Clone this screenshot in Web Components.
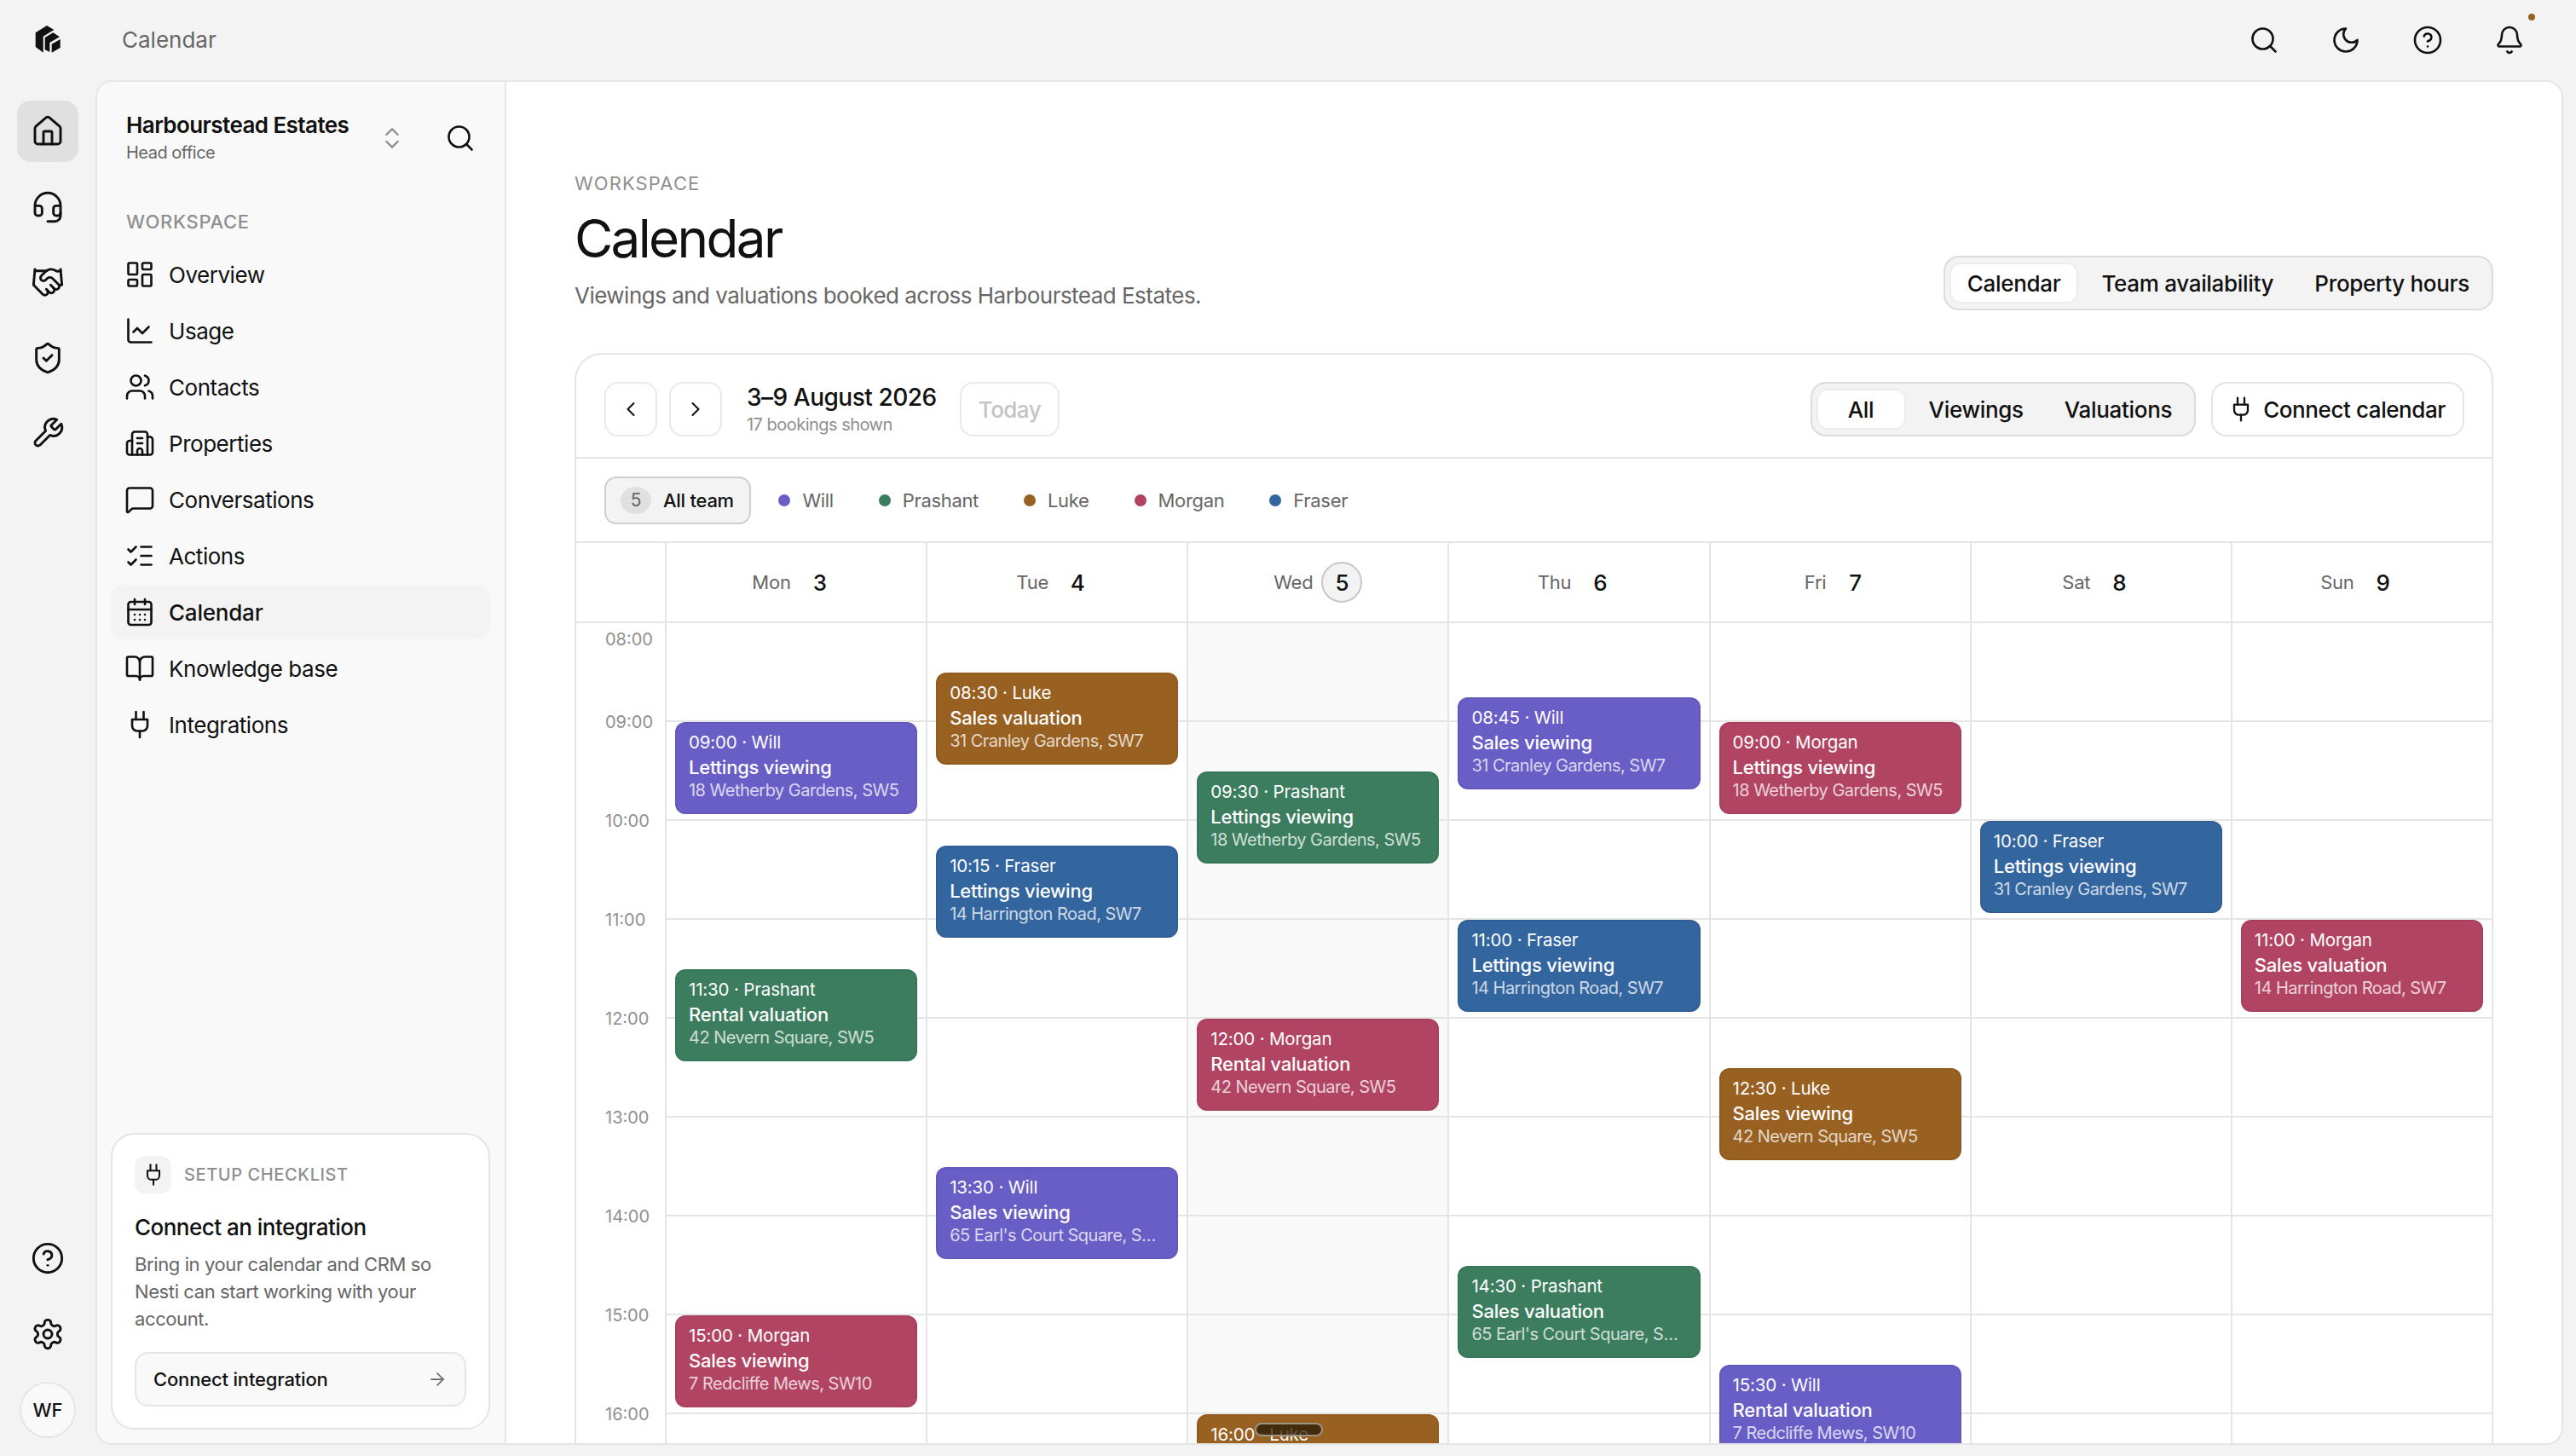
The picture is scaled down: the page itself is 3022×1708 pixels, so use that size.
<!doctype html>
<html>
<head>
<meta charset="utf-8">
<title>Calendar</title>
<style>
    html, body { margin: 0; height: 100%; overflow: hidden; }
    body { background: #f3f3f3; color: #111; font-family: Inter, "Liberation Sans", sans-serif; }
</style>
</head>
<body>
<app-shell></app-shell>
<script>
    const ICONS = {
        home: '<path d="M15 21v-8a1 1 0 0 0-1-1h-4a1 1 0 0 0-1 1v8"/><path d="M3 10a2 2 0 0 1 .709-1.528l7-5.999a2 2 0 0 1 2.582 0l7 5.999A2 2 0 0 1 21 10v9a2 2 0 0 1-2 2H5a2 2 0 0 1-2-2z"/>',
        headset: '<path d="M3 11h3a2 2 0 0 1 2 2v3a2 2 0 0 1-2 2H5a2 2 0 0 1-2-2v-5Zm0 0a9 9 0 1 1 18 0m0 0v5a2 2 0 0 1-2 2h-1a2 2 0 0 1-2-2v-3a2 2 0 0 1 2-2h3Z"/><path d="M21 16v2a4 4 0 0 1-4 4h-5"/>',
        handshake: '<path d="m11 17 2 2a1 1 0 1 0 3-3"/><path d="m14 14 2.5 2.5a1 1 0 1 0 3-3l-3.88-3.88a3 3 0 0 0-4.24 0l-.88.88a1 1 0 1 1-3-3l2.81-2.81a5.79 5.79 0 0 1 7.06-.87l.47.28a2 2 0 0 0 1.42.25L21 4"/><path d="m21 3 1 11h-2"/><path d="M3 3 2 14l6.5 6.5a1 1 0 1 0 3-3"/><path d="M3 4h8"/>',
        shield: '<path d="M20 13c0 5-3.5 7.5-7.66 8.95a1 1 0 0 1-.67-.01C7.5 20.5 4 18 4 13V6a1 1 0 0 1 1-1c2 0 4.5-1.2 6.24-2.72a1.17 1.17 0 0 1 1.52 0C14.51 3.81 17 5 19 5a1 1 0 0 1 1 1z"/><path d="m9 12 2 2 4-4"/>',
        wrench: '<path d="M14.7 6.3a1 1 0 0 0 0 1.4l1.6 1.6a1 1 0 0 0 1.4 0l3.77-3.77a6 6 0 0 1-7.94 7.94l-6.91 6.91a2.12 2.12 0 0 1-3-3l6.91-6.91a6 6 0 0 1 7.94-7.94l-3.76 3.76z"/>',
        search: '<circle cx="11" cy="11" r="8"/><path d="m21 21-4.3-4.3"/>',
        moon: '<path d="M12 3a6 6 0 0 0 9 9 9 9 0 1 1-9-9Z"/>',
        help: '<circle cx="12" cy="12" r="10"/><path d="M9.09 9a3 3 0 0 1 5.83 1c0 2-3 3-3 3"/><path d="M12 17h.01"/>',
        bell: '<path d="M10.268 21a2 2 0 0 0 3.464 0"/><path d="M3.262 15.326A1 1 0 0 0 4 17h16a1 1 0 0 0 .74-1.673C19.41 13.956 18 12.499 18 8A6 6 0 0 0 6 8c0 4.499-1.411 5.956-2.738 7.326"/>',
        settings: '<path d="M12.22 2h-.44a2 2 0 0 0-2 2v.18a2 2 0 0 1-1 1.73l-.43.25a2 2 0 0 1-2 0l-.15-.08a2 2 0 0 0-2.73.73l-.22.38a2 2 0 0 0 .73 2.73l.15.1a2 2 0 0 1 1 1.72v.51a2 2 0 0 1-1 1.74l-.15.09a2 2 0 0 0-.73 2.73l.22.38a2 2 0 0 0 2.73.73l.15-.08a2 2 0 0 1 2 0l.43.25a2 2 0 0 1 1 1.73V20a2 2 0 0 0 2 2h.44a2 2 0 0 0 2-2v-.18a2 2 0 0 1 1-1.73l.43-.25a2 2 0 0 1 2 0l.15.08a2 2 0 0 0 2.73-.73l.22-.39a2 2 0 0 0-.73-2.73l-.15-.08a2 2 0 0 1-1-1.74v-.5a2 2 0 0 1 1-1.74l.15-.09a2 2 0 0 0 .73-2.73l-.22-.38a2 2 0 0 0-2.73-.73l-.15.08a2 2 0 0 1-2 0l-.43-.25a2 2 0 0 1-1-1.73V4a2 2 0 0 0-2-2z"/><circle cx="12" cy="12" r="3"/>',
        overview: '<rect x="3" y="3" width="7" height="9" rx="1"/><rect x="14" y="3" width="7" height="5" rx="1"/><rect x="14" y="12" width="7" height="9" rx="1"/><rect x="3" y="16" width="7" height="5" rx="1"/>',
        usage: '<path d="M3 3v16a2 2 0 0 0 2 2h16"/><path d="m19 9-5 5-4-4-3 3"/>',
        contacts: '<path d="M16 21v-2a4 4 0 0 0-4-4H6a4 4 0 0 0-4 4v2"/><circle cx="9" cy="7" r="4"/><path d="M16 3.128a4 4 0 0 1 0 7.744"/><path d="M22 21v-2a4 4 0 0 0-3-3.87"/>',
        properties: '<path d="M10 12h4"/><path d="M10 8h4"/><path d="M14 21v-3a2 2 0 0 0-4 0v3"/><path d="M6 10H4a2 2 0 0 0-2 2v7a2 2 0 0 0 2 2h16a2 2 0 0 0 2-2V9a2 2 0 0 0-2-2h-2"/><path d="M6 21V5a2 2 0 0 1 2-2h8a2 2 0 0 1 2 2v16"/>',
        chat: '<path d="M22 17a2 2 0 0 1-2 2H6.828a2 2 0 0 0-1.414.586l-2.202 2.202A.71.71 0 0 1 2 21.286V5a2 2 0 0 1 2-2h16a2 2 0 0 1 2 2z"/>',
        actions: '<path d="M13 5h8"/><path d="M13 12h8"/><path d="M13 19h8"/><path d="m3 17 2 2 4-4"/><path d="m3 7 2 2 4-4"/>',
        calendar: '<path d="M8 2v4"/><path d="M16 2v4"/><rect x="3" y="4" width="18" height="18" rx="2"/><path d="M3 10h18"/><path d="M8 14h.01"/><path d="M12 14h.01"/><path d="M16 14h.01"/><path d="M8 18h.01"/><path d="M12 18h.01"/><path d="M16 18h.01"/>',
        book: '<path d="M12 7v14"/><path d="M3 18a1 1 0 0 1-1-1V4a1 1 0 0 1 1-1h5a4 4 0 0 1 4 4 4 4 0 0 1 4-4h5a1 1 0 0 1 1 1v13a1 1 0 0 1-1 1h-6a3 3 0 0 0-3 3 3 3 0 0 0-3-3z"/>',
        plug: '<path d="M12 22v-5"/><path d="M9 8V2"/><path d="M15 8V2"/><path d="M18 8v5a4 4 0 0 1-4 4h-4a4 4 0 0 1-4-4V8Z"/>',
        updown: '<path d="m7 15 5 5 5-5"/><path d="m7 9 5-5 5 5"/>',
        arrow: '<path d="M5 12h14"/><path d="m12 5 7 7-7 7"/>',
        prev: '<path d="m15 18-6-6 6-6"/>',
        next: '<path d="m9 18 6-6-6-6"/>'
    };

    class UiIcon extends HTMLElement {
        connectedCallback() {
            const size = this.getAttribute('size') || 36;
            const weight = this.getAttribute('weight') || 1.75;
            const root = this.shadowRoot || this.attachShadow({mode: 'open'});
            root.innerHTML = `<style>:host { display: inline-flex; flex: none; color: inherit; }</style>
                <svg width="${size}" height="${size}" viewBox="0 0 24 24" fill="none" stroke="currentColor" stroke-width="${weight}" stroke-linecap="round" stroke-linejoin="round">${ICONS[this.getAttribute('name')]}</svg>`;
        }
    }

    class TopBar extends HTMLElement {
        connectedCallback() {
            this.attachShadow({mode: 'open'}).innerHTML = `
            <style>
                :host { display: flex; align-items: center; height: 94px; padding-left: 143px; padding-right: 60px; }
                .title { flex: 1; font-size: 26px; color: #666; margin-top: -2px; }
                .acts { display: flex; gap: 60px; }
                .bell { position: relative; display: flex; }
                .bell i { position: absolute; right: -12px; top: -13px; width: 8px; height: 8px; border-radius: 50%; background: #986021; }
            </style>
            <div class="title">Calendar</div>
            <div class="acts">
                <ui-icon name="search"></ui-icon>
                <ui-icon name="moon"></ui-icon>
                <ui-icon name="help"></ui-icon>
                <span class="bell"><ui-icon name="bell"></ui-icon><i></i></span>
            </div>`;
        }
    }

    class SideRail extends HTMLElement {
        connectedCallback() {
            this.attachShadow({mode: 'open'}).innerHTML = `
            <style>
                :host { display: flex; flex-direction: column; align-items: center; width: 112px; box-sizing: border-box; padding: 24px 0 21px; }
                .b { width: 72px; height: 72px; border-radius: 16px; display: flex; align-items: center; justify-content: center; margin-bottom: 16.5px; }
                .b.on { background: #e0e0e0; }
                .sp { flex: 1; }
                .av { width: 66px; height: 66px; box-sizing: border-box; border-radius: 50%; background: #f9f9f9; border: 2px solid #e5e5e5; display: flex; align-items: center; justify-content: center; font-size: 22px; font-weight: 500; margin-top: 4px; }
            </style>
            <div class="b on"><ui-icon name="home" size="40"></ui-icon></div>
            <div class="b"><ui-icon name="headset" size="40"></ui-icon></div>
            <div class="b"><ui-icon name="handshake" size="40"></ui-icon></div>
            <div class="b"><ui-icon name="shield" size="40"></ui-icon></div>
            <div class="b"><ui-icon name="wrench" size="40"></ui-icon></div>
            <div class="sp"></div>
            <div class="b"><ui-icon name="help" size="40"></ui-icon></div>
            <div class="b"><ui-icon name="settings" size="40"></ui-icon></div>
            <div class="av">WF</div>`;
        }
    }

    class NavItem extends HTMLElement {
        connectedCallback() {
            const on = this.hasAttribute('active');
            this.attachShadow({mode: 'open'}).innerHTML = `
            <style>
                :host { display: flex; align-items: center; gap: 16px; height: 64px; margin-bottom: 2px; padding-left: 16px; border-radius: 14px; font-size: 26px; letter-spacing: ${on ? '-.008em' : '-.018em'}; background: ${on ? '#f3f3f3' : 'transparent'}; font-weight: ${on ? 500 : 400}; }
            </style>
            <ui-icon name="${this.getAttribute('icon')}"></ui-icon><slot></slot>`;
        }
    }

    class SetupCard extends HTMLElement {
        connectedCallback() {
            this.attachShadow({mode: 'open'}).innerHTML = `
            <style>
                :host { display: block; box-sizing: border-box; height: 348px; background: #fff; border: 2px solid #e5e5e5; border-radius: 28px; padding: 25px 26px; }
                .top { display: flex; align-items: center; gap: 15px; }
                .badge { width: 43px; height: 44px; border-radius: 12px; background: #f3f3f3; display: flex; align-items: center; justify-content: center; }
                .eyebrow { font-size: 20px; letter-spacing: .03em; color: #8f8f8f; font-weight: 500; }
                h3 { margin: 24px 0 0; font-size: 26px; line-height: 32px; font-weight: 500; letter-spacing: -.02em; }
                p { margin: 11px 0 0; font-size: 22px; line-height: 32px; color: #666; letter-spacing: -.018em; }
                .btn { display: flex; align-items: center; justify-content: space-between; box-sizing: border-box; height: 64px; margin-top: 23px; padding: 0 20px; background: #f9f9f9; border: 2px solid #e5e5e5; border-radius: 16px; font-size: 22px; letter-spacing: -.008em; font-weight: 500; color: #666; }
                .btn span { color: #111; }
            </style>
            <div class="top"><span class="badge"><ui-icon name="plug" size="28"></ui-icon></span><span class="eyebrow">SETUP CHECKLIST</span></div>
            <h3>Connect an integration</h3>
            <p>Bring in your calendar and CRM so Nesti can start working with your account.</p>
            <div class="btn"><span>Connect integration</span><ui-icon name="arrow" size="24"></ui-icon></div>`;
        }
    }

    class SideNav extends HTMLElement {
        connectedCallback() {
            const items = [['overview','Overview'],['usage','Usage'],['contacts','Contacts'],['properties','Properties'],['chat','Conversations'],['actions','Actions'],['calendar','Calendar'],['book','Knowledge base'],['plug','Integrations']];
            this.attachShadow({mode: 'open'}).innerHTML = `
            <style>
                :host { display: flex; flex-direction: column; box-sizing: border-box; width: 480px; flex: none; background: #f9f9f9; border-right: 2px solid #e5e5e5; padding: 0 17px 16px 16px; }
                .org { display: flex; align-items: center; height: 132px; padding: 0 17px 0 18px; }
                .name { font-size: 26px; font-weight: 600; line-height: 32px; letter-spacing: -.022em; }
                .sub { font-size: 20px; line-height: 30px; margin-top: 1px; color: #666; letter-spacing: -.025em; }
                .txt { flex: 1; }
                .ud { color: #8f8f8f; margin-right: 46px; display: flex; }
                .lab { font-size: 22px; font-weight: 500; letter-spacing: .03em; color: #8f8f8f; padding: 0 18px; margin: 18px 0 16px; line-height: 28px; }
                .sp { flex: 1; }
            </style>
            <div class="org">
                <div class="txt"><div class="name">Harbourstead Estates</div><div class="sub">Head office</div></div>
                <span class="ud"><ui-icon name="updown" size="32"></ui-icon></span>
                <ui-icon name="search"></ui-icon>
            </div>
            <div class="lab">WORKSPACE</div>
            ${items.map(i => `<nav-item icon="${i[0]}"${i[1] === 'Calendar' ? ' active' : ''}>${i[1]}</nav-item>`).join('')}
            <div class="sp"></div>
            <setup-card></setup-card>`;
        }
    }

    class SegTabs extends HTMLElement {
        connectedCallback() {
            const items = this.getAttribute('items').split('|');
            const on = this.getAttribute('active');
            this.attachShadow({mode: 'open'}).innerHTML = `
            <style>
                :host { display: inline-flex; gap: 6px; box-sizing: border-box; height: 64px; padding: 6px 5px; background: #f3f3f3; border: 2px solid #dcdcdc; border-radius: 18px; font-size: 26px; font-weight: 500; letter-spacing: -.012em; }
                div { display: flex; align-items: center; justify-content: center; padding: 0 21px; border-radius: 13px; min-width: ${this.getAttribute('min') || 0}px; box-sizing: border-box; }
                div.on { background: #fff; box-shadow: 0 0 0 2px #ececec inset; }
            </style>
            ${items.map(t => `<div class="${t === on ? 'on' : ''}">${t}</div>`).join('')}`;
        }
    }

    class PageHeader extends HTMLElement {
        connectedCallback() {
            this.attachShadow({mode: 'open'}).innerHTML = `
            <style>
                :host { display: flex; justify-content: space-between; height: 163px; }
                seg-tabs { align-self: flex-end; }
                .eb { font-size: 22px; letter-spacing: .05em; color: #8f8f8f; line-height: 28px; }
                h1 { margin: 13px 0 0; font-size: 62px; line-height: 76px; font-weight: 400; letter-spacing: -.043em; }
                p { margin: 12px 0 0; font-size: 26px; line-height: 34px; color: #666; letter-spacing: -.02em; }
            </style>
            <div><div class="eb">WORKSPACE</div><h1>Calendar</h1><p>Viewings and valuations booked across Harbourstead Estates.</p></div>
            <seg-tabs items="Calendar|Team availability|Property hours" active="Calendar"></seg-tabs>`;
        }
    }

    class CalToolbar extends HTMLElement {
        connectedCallback() {
            this.attachShadow({mode: 'open'}).innerHTML = `
            <style>
                :host { display: flex; align-items: center; box-sizing: border-box; height: 122px; padding: 8px 32px 0 33px; border-bottom: 2px solid #e5e5e5; }
                .sq { width: 62px; height: 64px; box-sizing: border-box; border: 2px solid #e9e9e9; border-radius: 16px; display: flex; align-items: center; justify-content: center; margin-right: 14px; }
                .date { margin-left: 15px; margin-right: 27px; }
                .d { font-size: 28px; font-weight: 500; line-height: 36px; letter-spacing: -.017em; }
                .s { font-size: 20px; line-height: 28px; color: #8f8f8f; letter-spacing: -.026em; }
                .today { height: 64px; box-sizing: border-box; border: 2px solid #e9e9e9; border-radius: 16px; padding: 0 20px; display: flex; align-items: center; font-size: 26px; font-weight: 500; color: #c4c4c4; letter-spacing: -.02em; }
                .sp { flex: 1; }
                .conn { height: 64px; box-sizing: border-box; border: 2px solid #e5e5e5; border-radius: 18px; padding: 0 20px 0 17px; display: flex; align-items: center; gap: 10px; font-size: 26px; font-weight: 500; margin-left: 18px; letter-spacing: -.016em; }
            </style>
            <div class="sq"><ui-icon name="prev" size="28"></ui-icon></div>
            <div class="sq"><ui-icon name="next" size="28"></ui-icon></div>
            <div class="date"><div class="d">3–9 August 2026</div><div class="s">17 bookings shown</div></div>
            <div class="today">Today</div>
            <div class="sp"></div>
            <seg-tabs items="All|Viewings|Valuations" active="All" min="105"></seg-tabs>
            <div class="conn"><ui-icon name="plug" size="32"></ui-icon>Connect calendar</div>`;
        }
    }

    class CalFilter extends HTMLElement {
        connectedCallback() {
            const team = [['Will','#695dc6'],['Prashant','#3b7d5e'],['Luke','#986021'],['Morgan','#b24463'],['Fraser','#33659f']];
            this.attachShadow({mode: 'open'}).innerHTML = `
            <style>
                :host { display: flex; align-items: center; box-sizing: border-box; height: 99px; padding: 0 33px; gap: 12px; border-bottom: 2px solid #e5e5e5; font-size: 22px; letter-spacing: -.015em; color: #666; }
                .all { display: flex; align-items: center; gap: 14px; height: 56px; box-sizing: border-box; padding: 0 18px 0 17px; background: #f3f3f3; border: 2px solid #cfcfcf; border-radius: 14px; color: #111; font-weight: 500; letter-spacing: -.012em; }
                .n { width: 36px; height: 32px; border-radius: 50%; background: #e0e0e0; color: #666; display: flex; align-items: center; justify-content: center; font-size: 21px; font-weight: 400; }
                .p { display: flex; align-items: center; gap: 14px; padding: 0 20.5px; }
                .p i { width: 14px; height: 14px; border-radius: 50%; }
            </style>
            <div class="all"><span class="n">5</span>All team</div>
            ${team.map(t => `<div class="p"><i style="background:${t[1]}"></i>${t[0]}</div>`).join('')}`;
        }
    }

    class CalEvent extends HTMLElement {
        connectedCallback() {
            const [h, m] = this.getAttribute('at').split(':').map(Number);
            const top = (h - 8 + m / 60) * 116;
            this.style.setProperty('--top', top + 'px');
            this.style.setProperty('--bg', this.getAttribute('color'));
            this.attachShadow({mode: 'open'}).innerHTML = `
            <style>
                :host { position: absolute; left: 10px; right: 10px; top: var(--top); height: 108px; box-sizing: border-box; padding: 10px 16px; background: var(--bg); border-radius: 12px; box-shadow: inset 0 0 0 2px rgba(0,0,0,.05); color: #fff; overflow: hidden; }
                div { white-space: nowrap; overflow: hidden; text-overflow: ellipsis; }
                .a { font-size: 20.5px; font-weight: 400; line-height: 28px; letter-spacing: -.008em; }
                .b { font-size: 22px; font-weight: 500; line-height: 30px; letter-spacing: -.01em; }
                .c { font-size: 20px; line-height: 25px; opacity: .75; letter-spacing: -.026em; }
            </style>
            <div class="a">${this.getAttribute('at')} · ${this.getAttribute('who')}</div>
            <div class="b">${this.getAttribute('what')}</div>
            <div class="c">${this.getAttribute('where')}</div>`;
        }
    }

    const COLORS = {Will: '#695dc6', Prashant: '#3b7d5e', Luke: '#986021', Morgan: '#b24463', Fraser: '#33659f'};
    const WEEK = [
        ['Mon', 3, [['09:00','Will','Lettings viewing','18 Wetherby Gardens, SW5'],['11:30','Prashant','Rental valuation','42 Nevern Square, SW5'],['15:00','Morgan','Sales viewing','7 Redcliffe Mews, SW10']]],
        ['Tue', 4, [['08:30','Luke','Sales valuation','31 Cranley Gardens, SW7'],['10:15','Fraser','Lettings viewing','14 Harrington Road, SW7'],['13:30','Will','Sales viewing',"65 Earl's Court Square, SW5"]]],
        ['Wed', 5, [['09:30','Prashant','Lettings viewing','18 Wetherby Gardens, SW5'],['12:00','Morgan','Rental valuation','42 Nevern Square, SW5'],['16:00','Luke','Sales valuation','31 Cranley Gardens, SW7']]],
        ['Thu', 6, [['08:45','Will','Sales viewing','31 Cranley Gardens, SW7'],['11:00','Fraser','Lettings viewing','14 Harrington Road, SW7'],['14:30','Prashant','Sales valuation',"65 Earl's Court Square, SW5"]]],
        ['Fri', 7, [['09:00','Morgan','Lettings viewing','18 Wetherby Gardens, SW5'],['12:30','Luke','Sales viewing','42 Nevern Square, SW5'],['15:30','Will','Rental valuation','7 Redcliffe Mews, SW10']]],
        ['Sat', 8, [['10:00','Fraser','Lettings viewing','31 Cranley Gardens, SW7']]],
        ['Sun', 9, [['11:00','Morgan','Sales valuation','14 Harrington Road, SW7']]]
    ];

    class CalGrid extends HTMLElement {
        connectedCallback() {
            const hours = ['08:00','09:00','10:00','11:00','12:00','13:00','14:00','15:00','16:00'];
            this.attachShadow({mode: 'open'}).innerHTML = `
            <style>
                :host { display: grid; grid-template-columns: 104px repeat(7, 1fr); grid-template-rows: 94px 1160px; }
                .corner { border-bottom: 2px solid #e5e5e5; }
                .hd { display: flex; align-items: center; justify-content: center; gap: 10px; border-left: 2px solid #e5e5e5; border-bottom: 2px solid #e5e5e5; font-size: 22px; color: #666; letter-spacing: -.01em; }
                .hd b { width: 48px; height: 48px; box-sizing: border-box; display: flex; align-items: center; justify-content: center; border-radius: 50%; font-size: 26px; font-weight: 500; color: #111; }
                .hd b.on { background: #f3f3f3; border: 2px solid #c8c8c8; }
                .times { position: relative; font-size: 20px; color: #8f8f8f; }
                .times span { position: absolute; left: 34px; line-height: 28px; }
                .col { position: relative; border-left: 2px solid #e5e5e5; background-image: repeating-linear-gradient(to bottom, transparent 0, transparent 114px, #e5e5e5 114px, #e5e5e5 116px); }
                .col.today { background-color: #f9f9f9; }
            </style>
            <div class="corner"></div>
            ${WEEK.map(d => `<div class="hd">${d[0]}<b class="${d[1] === 5 ? 'on' : ''}">${d[1]}</b></div>`).join('')}
            <div class="times">${hours.map((t, i) => `<span style="top:${i ? i * 116 - 14 : 5}px">${t}</span>`).join('')}</div>
            ${WEEK.map(d => `<div class="col${d[1] === 5 ? ' today' : ''}">${d[2].map(e => `<cal-event at="${e[0]}" who="${e[1]}" what="${e[2]}" where="${e[3]}" color="${COLORS[e[1]]}"></cal-event>`).join('')}</div>`).join('')}`;
        }
    }

    class CalCard extends HTMLElement {
        connectedCallback() {
            this.attachShadow({mode: 'open'}).innerHTML = `
            <style>
                :host { display: block; box-sizing: border-box; border: 2px solid #e5e5e5; border-bottom: 0; border-radius: 32px 32px 0 0; margin-top: 50px; }
            </style>
            <cal-toolbar></cal-toolbar><cal-filter></cal-filter><cal-grid></cal-grid>`;
        }
    }

    class AppShell extends HTMLElement {
        connectedCallback() {
            this.attachShadow({mode: 'open'}).innerHTML = `
            <style>
                :host { display: flex; flex-direction: column; height: 1708px; overflow: hidden; }
                .row { flex: 1; display: flex; min-height: 0; }
                .panel { flex: 1; display: flex; min-width: 0; margin: 0 15px 13px 0; background: #fff; border: 2px solid #e5e5e5; border-radius: 20px; overflow: hidden; position: relative; }
                main { flex: 1; min-width: 0; padding: 105px 80px 0; overflow: hidden; }
                .logo { position: absolute; left: 30px; top: 20px; }
                .thumb { position: absolute; left: 1358px; bottom: 8px; width: 80px; height: 16px; box-sizing: border-box; border-radius: 8px; background: rgba(40,25,5,.75); border: 2px solid #9c9284; }
            </style>
            <top-bar></top-bar>
            <svg class="logo" width="50" height="50" viewBox="0 0 50 50"><path fill="#111" d="M11.7 18.3 25 10l8.3 5-12.6 7.7v19l-9-6.7z"/><path fill="#111" d="M22.7 24l9.6-5.7 7.7 5-11.7 6.7v11l-5.6-2.7z"/><path fill="#111" d="M30.7 31.7l10-5.7v10l-10 5.7z"/></svg>
            <div class="row">
                <side-rail></side-rail>
                <div class="panel">
                    <side-nav></side-nav>
                    <main><page-header></page-header><cal-card></cal-card></main>
                    <div class="thumb"></div>
                </div>
            </div>`;
        }
    }

    customElements.define('ui-icon', UiIcon);
    customElements.define('top-bar', TopBar);
    customElements.define('side-rail', SideRail);
    customElements.define('nav-item', NavItem);
    customElements.define('setup-card', SetupCard);
    customElements.define('side-nav', SideNav);
    customElements.define('seg-tabs', SegTabs);
    customElements.define('page-header', PageHeader);
    customElements.define('cal-toolbar', CalToolbar);
    customElements.define('cal-filter', CalFilter);
    customElements.define('cal-event', CalEvent);
    customElements.define('cal-grid', CalGrid);
    customElements.define('cal-card', CalCard);
    customElements.define('app-shell', AppShell);
</script>
</body>
</html>
